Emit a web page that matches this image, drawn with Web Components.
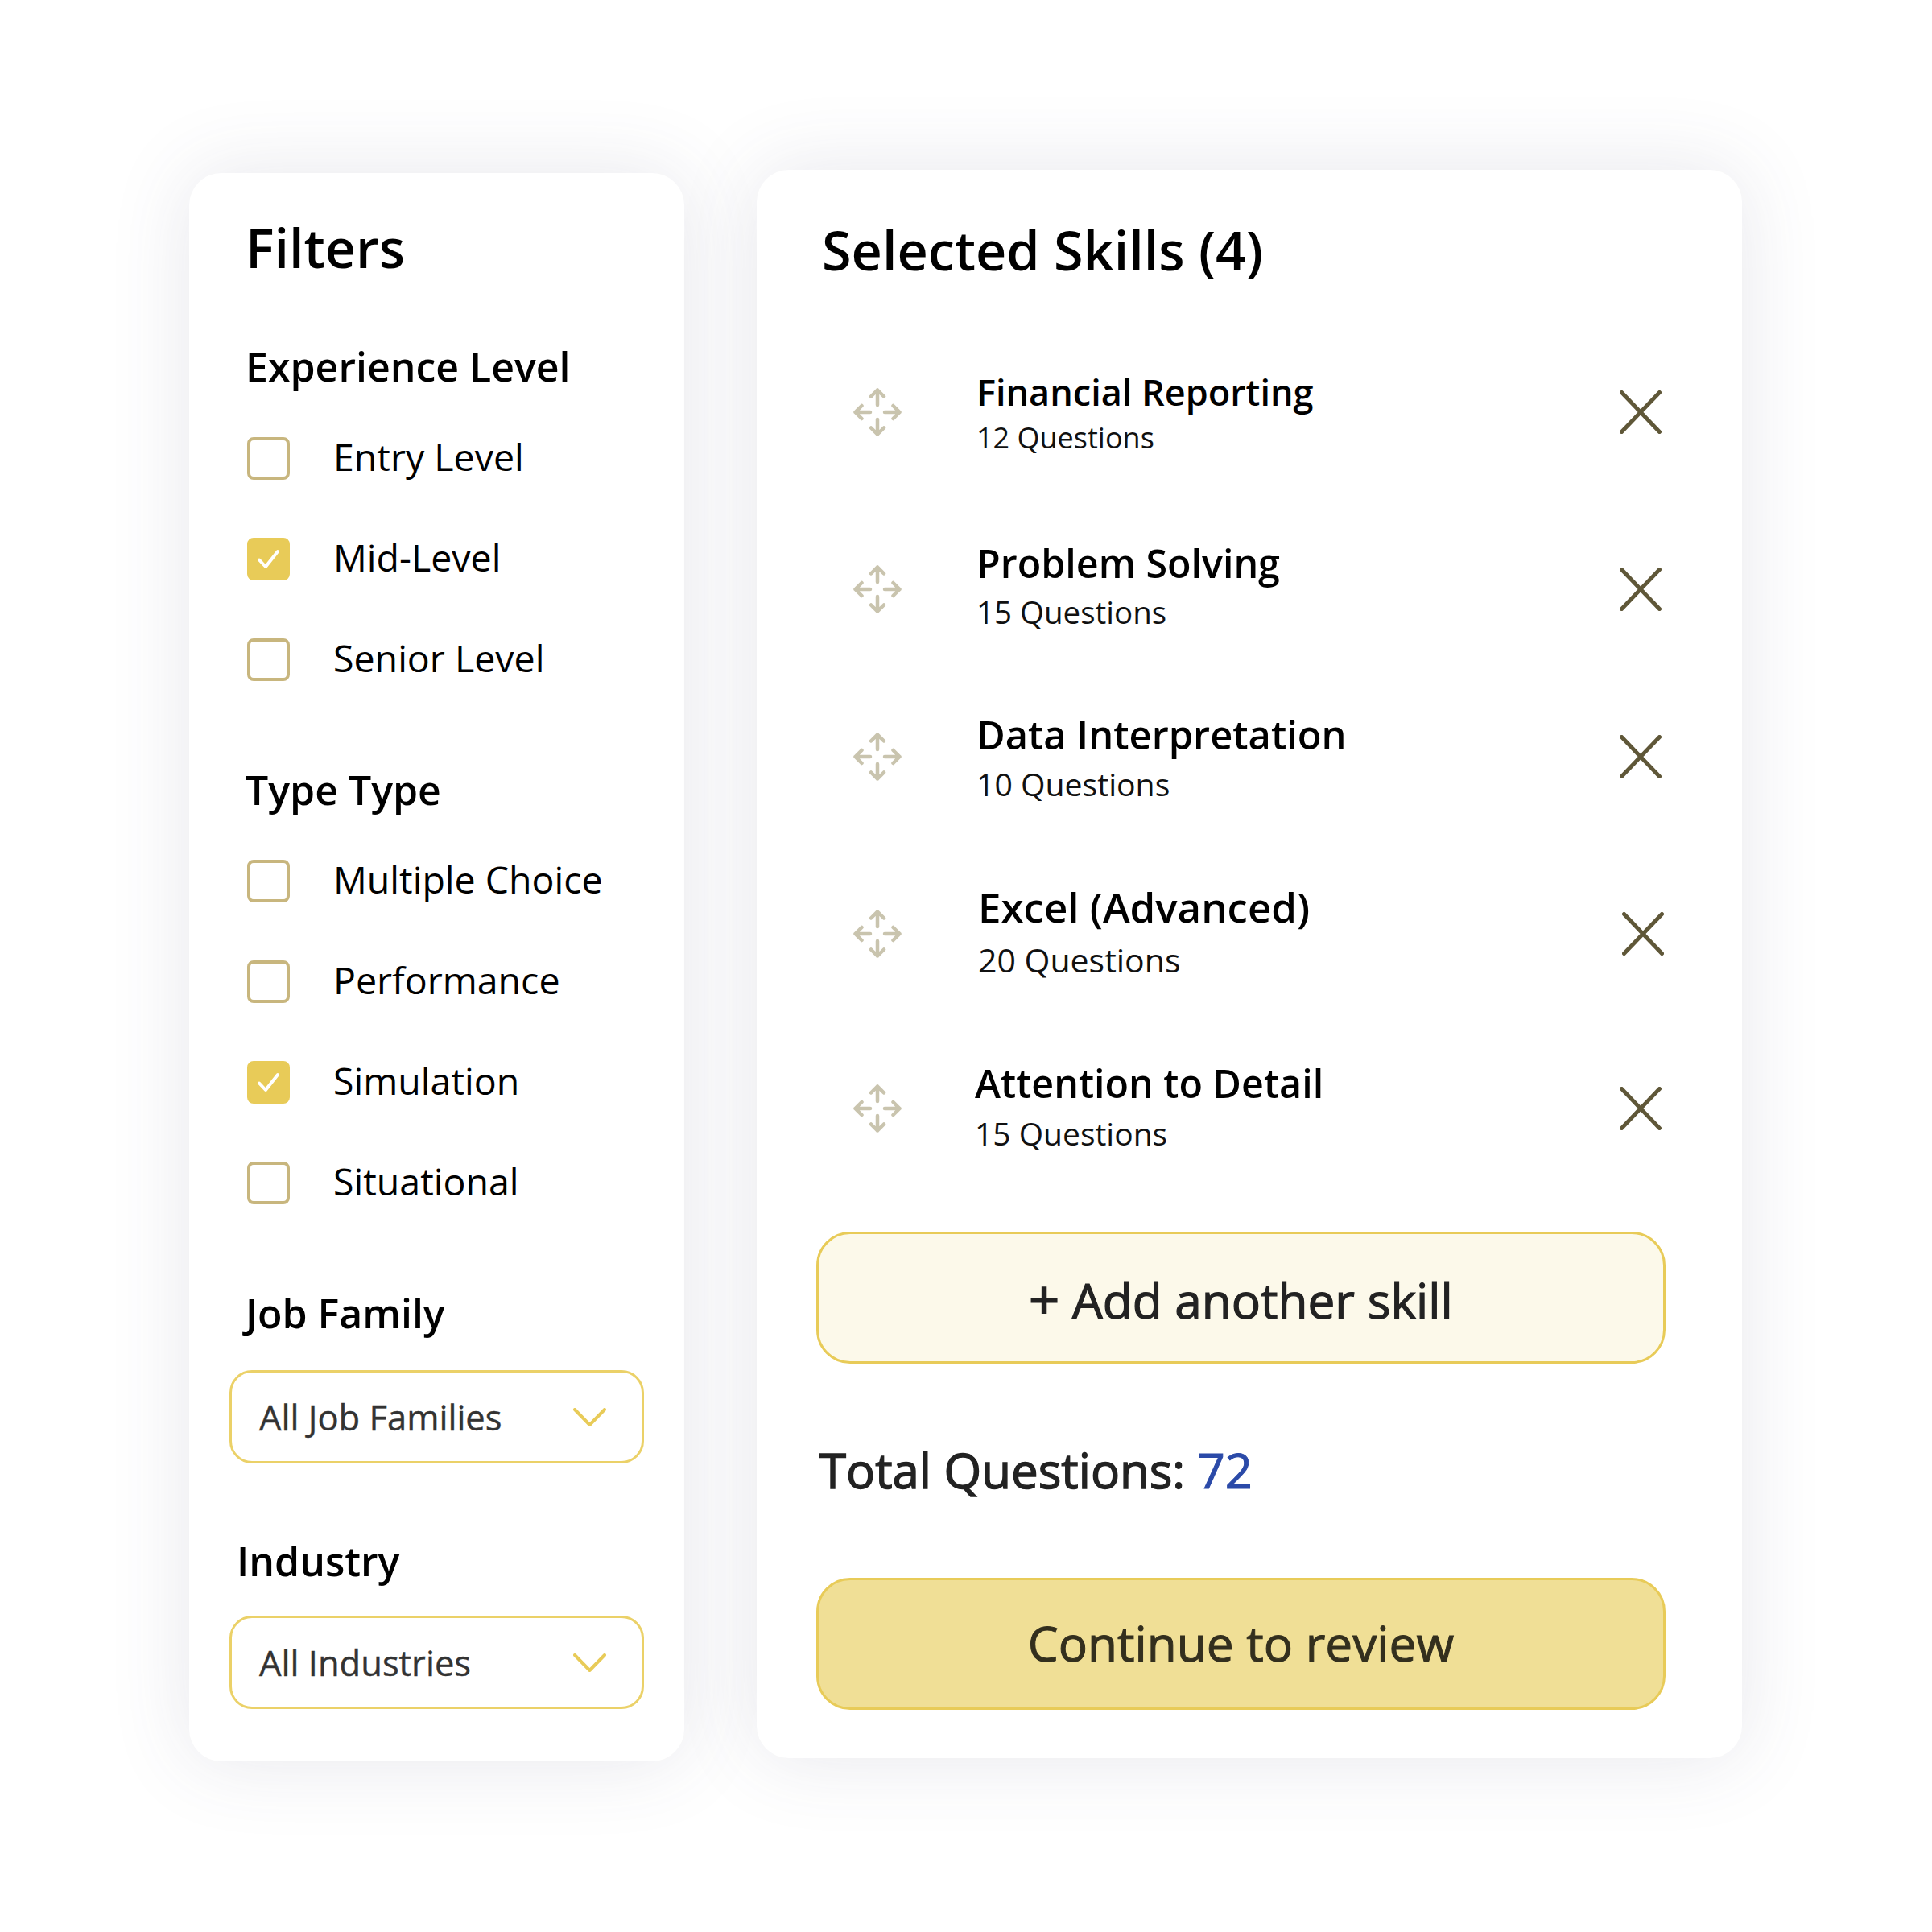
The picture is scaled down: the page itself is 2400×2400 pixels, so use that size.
<!DOCTYPE html>
<html>
<head>
<meta charset="utf-8">
<title>Skills</title>
<style>
  html, body { margin: 0; padding: 0; background: #fff; }
  body { width: 2400px; height: 2400px; font-family: "Open Sans", "Noto Sans", sans-serif; }
  #stage { display: flex; align-items: flex-start; padding: 211px 0 0 235px; gap: 90px; }
  filter-panel { margin-top: 4px; }
  panel-heading.exp { margin-top: 78px; margin-left: 2px; }
  panel-heading.type { margin-top: 105px; margin-left: 2px; }
  panel-heading.job { margin-top: 105px; margin-left: 2px; }
  panel-heading.ind { margin-top: 91px; margin-left: -9px; }
  check-row { margin-top: 72px; }
  check-row.first { margin-top: 58px; }
  check-row.first2 { margin-top: 57px; }
  select-box.a { margin-top: 41px; }
  select-box.b { margin-top: 38px; }
  .plus { font-size: 66px; -webkit-text-stroke: 2px #222; }
</style>
</head>
<body>
<div id="stage">
  <filter-panel>
    <span slot="title">Filters</span>
    <panel-heading class="exp">Experience Level</panel-heading>
    <check-row class="first">Entry Level</check-row>
    <check-row checked>Mid-Level</check-row>
    <check-row>Senior Level</check-row>
    <panel-heading class="type">Type Type</panel-heading>
    <check-row class="first2">Multiple Choice</check-row>
    <check-row>Performance</check-row>
    <check-row checked>Simulation</check-row>
    <check-row>Situational</check-row>
    <panel-heading class="job">Job Family</panel-heading>
    <select-box class="a">All Job Families</select-box>
    <panel-heading class="ind">Industry</panel-heading>
    <select-box class="b">All Industries</select-box>
  </filter-panel>

  <skills-panel>
    <span slot="title">Selected Skills (4)</span>
    <skill-row gap="100" size="45" sub="36" base="-8" subbase="45.5" count="12 Questions">Financial Reporting</skill-row>
    <skill-row gap="100" size="48.4" sub="38.5" base="-14" subbase="43" count="15 Questions">Problem Solving</skill-row>
    <skill-row gap="88" size="48.8" sub="39.2" base="-9" subbase="49.5" count="10 Questions">Data Interpretation</skill-row>
    <skill-row gap="100" shift="2" xshift="3" size="51" sub="41" base="-14" subbase="48" count="20 Questions">Excel (Advanced)</skill-row>
    <skill-row gap="97" shift="-2" size="48.4" sub="39" base="-13" subbase="46" count="15 Questions">Attention to Detail</skill-row>
    <action-button class="add"><span class="plus">+</span> Add another skill</action-button>
    <total-line value="72">Total Questions:</total-line>
    <action-button primary>Continue to review</action-button>
  </skills-panel>
</div>

<script>
const SANS = '"Open Sans", "Noto Sans", sans-serif'
const SHADOW = '0 0 100px rgba(70, 70, 110, .13)'

class FilterPanel extends HTMLElement {
  constructor() {
    super()
    this.attachShadow({ mode: 'open' }).innerHTML = `
      <style>
        :host {
          display: block; box-sizing: border-box; width: 615px;
          padding: 52px 0 65px 68px; background: #fff; border-radius: 40px;
          box-shadow: ${SHADOW};
          font-family: ${SANS}; color: #000;
        }
        h2 { margin: 0 0 0 2px; font-size: 66.5px; line-height: 80px; font-weight: 600; }
      </style>
      <h2><slot name="title"></slot></h2>
      <slot></slot>`
  }
}

class PanelHeading extends HTMLElement {
  constructor() {
    super()
    this.attachShadow({ mode: 'open' }).innerHTML = `
      <style>
        :host { display: block; font-size: 50px; line-height: 60px; font-weight: 600; color: #000; }
      </style>
      <slot></slot>`
  }
}

class CheckRow extends HTMLElement {
  constructor() {
    super()
    const on = this.hasAttribute('checked')
    this.attachShadow({ mode: 'open' }).innerHTML = `
      <style>
        :host { display: flex; align-items: center; height: 53px; margin-left: 4px; font-size: 46.5px; line-height: 53px; color: #000; }
        .box { box-sizing: border-box; flex: none; width: 53px; height: 53px; border-radius: 8px; border: 4px solid #c8b67e; background: #fff; }
        .box.on { border-color: #e8cb58; background: #e8cb58; }
        .box svg { display: block; margin: -4px; }
        label { margin-left: 54px; padding-bottom: 5px; white-space: nowrap; }
      </style>
      <div class="box ${on ? 'on' : ''}">
        ${on ? `<svg width="53" height="53" viewBox="0 0 53 53" fill="none"><path d="M15 27.5 L23 36 L38 17" stroke="#fff" stroke-width="4" stroke-linecap="round" stroke-linejoin="round"/></svg>` : ''}
      </div>
      <label><slot></slot></label>`
  }
}

class SelectBox extends HTMLElement {
  constructor() {
    super()
    this.attachShadow({ mode: 'open' }).innerHTML = `
      <style>
        :host {
          display: flex; align-items: center; justify-content: space-between; box-sizing: border-box;
          width: 515px; height: 116px; margin-left: -18px; padding: 0 44px 0 34px;
          border: 3px solid #ebd168; border-radius: 28px; background: #fff;
          font-size: 43.5px; color: #333; -webkit-text-stroke: .4px #333;
        }
        svg { display: block; flex: none; }
      </style>
      <span><slot></slot></span>
      <svg width="41" height="23" viewBox="0 0 41 23" fill="none"><path d="M2 2 L20.5 21 L39 2" stroke="#e8cb58" stroke-width="4" stroke-linecap="round" stroke-linejoin="round"/></svg>`
  }
}

class SkillsPanel extends HTMLElement {
  constructor() {
    super()
    this.attachShadow({ mode: 'open' }).innerHTML = `
      <style>
        :host {
          display: block; box-sizing: border-box; width: 1224px; height: 1973px;
          padding: 57px 78px 0 78px; background: #fff; border-radius: 40px;
          box-shadow: ${SHADOW};
          font-family: ${SANS}; color: #000;
        }
        h2 { margin: 0 0 0 3px; font-size: 66.5px; line-height: 84px; font-weight: 600; }
      </style>
      <h2><slot name="title"></slot></h2>
      <slot></slot>`
  }
}

class SkillRow extends HTMLElement {
  constructor() {
    super()
    const size = Number(this.getAttribute('size'))
    const sub = Number(this.getAttribute('sub'))
    const base = Number(this.getAttribute('base'))
    const subbase = Number(this.getAttribute('subbase'))
    const shift = this.getAttribute('shift') || 0
    const xshift = this.getAttribute('xshift') || 0
    const count = this.getAttribute('count')
    // line tops worked out from the wanted baselines, measured from the row centre
    const nameTop = 30 + base - .388 * size
    const subTop = 60 + subbase - (25 + .388 * sub) - (nameTop + 60)
    this.attachShadow({ mode: 'open' }).innerHTML = `
      <style>
        :host { display: flex; align-items: center; height: 120px; margin-top: ${this.getAttribute('gap')}px; }
        .drag { flex: none; margin-left: 42px; display: block; }
        .text { align-self: flex-start; margin-left: ${93 + Number(shift)}px; margin-top: ${nameTop}px; }
        .name { font-size: ${size}px; line-height: 60px; font-weight: 600; color: #000; white-space: nowrap; }
        .count { margin-top: ${subTop}px; font-size: ${sub}px; line-height: 50px; color: #111; white-space: nowrap; }
        .x { flex: none; display: block; margin-left: auto; margin-right: ${22 - Number(xshift)}px; }
      </style>
      <svg class="drag" width="60" height="60" viewBox="0 0 60 60" fill="none" stroke="#c9c4ae" stroke-width="4.5" stroke-linecap="round" stroke-linejoin="round">
        <path d="M30 2.5 V21 M22 10.5 L30 2.5 L38 10.5"/>
        <path d="M30 57.5 V39 M22 49.5 L30 57.5 L38 49.5"/>
        <path d="M2.5 30 H21 M10.5 22 L2.5 30 L10.5 38"/>
        <path d="M57.5 30 H39 M49.5 22 L57.5 30 L49.5 38"/>
      </svg>
      <div class="text">
        <div class="name"><slot></slot></div>
        <div class="count">${count}</div>
      </div>
      <svg class="x" width="52" height="54" viewBox="0 0 52 54" fill="none" stroke="#5f5738" stroke-width="5" stroke-linecap="round"><path d="M2.5 2.5 L49.5 51.5 M49.5 2.5 L2.5 51.5"/></svg>`
  }
}

class ActionButton extends HTMLElement {
  constructor() {
    super()
    const primary = this.hasAttribute('primary')
    const ink = primary ? '#332f1e' : '#222'
    this.attachShadow({ mode: 'open' }).innerHTML = `
      <style>
        :host {
          display: flex; align-items: center; justify-content: center; box-sizing: border-box;
          width: 1055px; height: 164px; margin-left: -4px; margin-top: ${primary ? 99 : 93}px;
          padding: ${primary ? '0 0 2px' : '2px 0 0'};
          border: 3px solid #e8cb58; border-radius: 42px;
          background: ${primary ? '#f0df96' : '#fcf9ea'};
          font-size: 60.3px; color: ${ink}; -webkit-text-stroke: ${primary ? 1 : 1.2}px ${ink};
          white-space: pre;
        }
        div { line-height: 84px; }
      </style>
      <div><slot></slot></div>`
  }
}

class TotalLine extends HTMLElement {
  constructor() {
    super()
    this.attachShadow({ mode: 'open' }).innerHTML = `
      <style>
        :host { display: block; margin-top: 97px; font-size: 60px; line-height: 70px; color: #222; -webkit-text-stroke: 1.4px #222; }
        b { font-size: 59.5px; font-weight: 400; color: #2b4aa8; -webkit-text-stroke: 1px #2b4aa8; }
      </style>
      <slot></slot> <b>${this.getAttribute('value')}</b>`
  }
}

customElements.define('filter-panel', FilterPanel)
customElements.define('panel-heading', PanelHeading)
customElements.define('check-row', CheckRow)
customElements.define('select-box', SelectBox)
customElements.define('skills-panel', SkillsPanel)
customElements.define('skill-row', SkillRow)
customElements.define('action-button', ActionButton)
customElements.define('total-line', TotalLine)
</script>
</body>
</html>
